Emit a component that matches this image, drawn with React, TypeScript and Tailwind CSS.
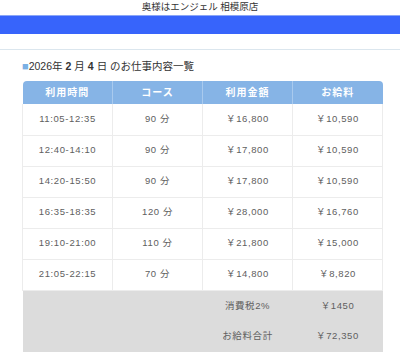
const rows = [
  { time: '11:05-12:35', course: '90 分', amount: '￥16,800', pay: '￥10,590' },
  { time: '12:40-14:10', course: '90 分', amount: '￥17,800', pay: '￥10,590' },
  { time: '14:20-15:50', course: '90 分', amount: '￥17,800', pay: '￥10,590' },
  { time: '16:35-18:35', course: '120 分', amount: '￥28,000', pay: '￥16,760' },
  { time: '19:10-21:00', course: '110 分', amount: '￥21,800', pay: '￥15,000' },
  { time: '21:05-22:15', course: '70 分', amount: '￥14,800', pay: '￥8,820' },
];

const font = { fontFamily: '"Liberation Sans", "Noto Sans CJK JP", sans-serif' };

export default function App() {
  return (
    <div className="w-[400px] h-[352px] overflow-hidden bg-white text-[#444]" style={font}>
      {/* Title */}
      <div className="h-[15px] flex items-center justify-center text-[9.5px] text-[#333]">
        奥様はエンジェル 相模原店
      </div>

      {/* Blue bar */}
      <div className="h-[19px] bg-[#3764fb] border-t border-[#8aa6f7]" />

      <div className="h-[16px] border-b border-[#dbe6ee]" />

      <div className="px-[22px]">
        <h2 className="h-[31px] flex items-center text-[10.5px] text-[#333] pt-[2px]">
          <span className="text-[#7ab0e4] text-[11px]">■</span>
          2026年 <b className="mx-[3px]">2</b>月 <b className="mx-[3px]">4</b>日 のお仕事内容一覧
        </h2>

        <table className="w-[361px] table-fixed border-collapse text-[9.5px] tracking-[0.6px] text-[#606060]">
          <thead>
            <tr className="bg-[#86b4e6] text-white font-bold h-[23px] text-[10px] tracking-[1px]">
              <th className="rounded-tl-[4px] border-r border-[#a9caee]">利用時間</th>
              <th className="border-r border-[#a9caee]">コース</th>
              <th className="border-r border-[#a9caee]">利用金額</th>
              <th className="rounded-tr-[4px]">お給料</th>
            </tr>
          </thead>
          <tbody>
            {rows.map((r) => (
              <tr key={r.time} className="h-[31px] border-b border-[#ececec]">
                <td className="text-center border-l border-r border-[#ececec]">{r.time}</td>
                <td className="text-center border-r border-[#ececec]">{r.course}</td>
                <td className="text-center border-r border-[#ececec]">{r.amount}</td>
                <td className="text-center border-r border-[#ececec]">{r.pay}</td>
              </tr>
            ))}
            <tr className="h-[31px] bg-[#dcdcdc]">
              <td />
              <td />
              <td className="text-center">消費税2%</td>
              <td className="text-center">￥1450</td>
            </tr>
            <tr className="h-[31px] bg-[#dcdcdc]">
              <td />
              <td />
              <td className="text-center">お給料合計</td>
              <td className="text-center">￥72,350</td>
            </tr>
          </tbody>
        </table>
      </div>
    </div>
  );
}
